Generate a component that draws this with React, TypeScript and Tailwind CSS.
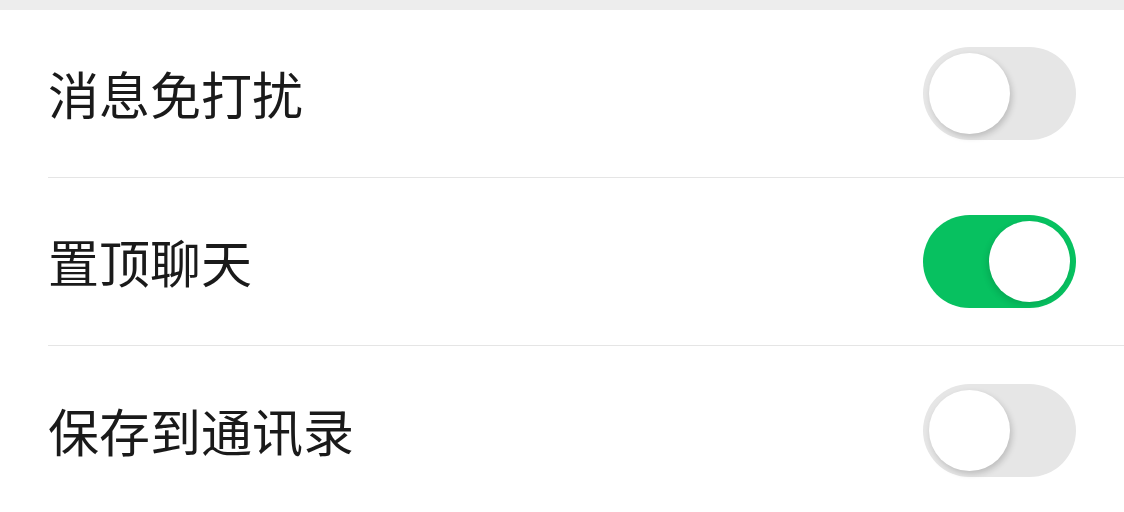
import React, { useState } from 'react';

type Setting = { label: string; on: boolean };

const initial: Setting[] = [
  { label: '消息免打扰', on: false },
  { label: '置顶聊天', on: true },
  { label: '保存到通讯录', on: false },
];

function Toggle({ on, onClick }: { on: boolean; onClick: () => void }) {
  return (
    <button
      onClick={onClick}
      className={`relative w-[153px] h-[93px] rounded-full flex-shrink-0 transition-colors ${
        on ? 'bg-[#07c160]' : 'bg-[#e6e6e6]'
      }`}
    >
      <span
        className={`absolute top-[6px] w-[81px] h-[81px] rounded-full bg-white transition-all ${
          on
            ? 'left-[66px] shadow-[-2px_3px_6px_rgba(0,0,0,0.12)]'
            : 'left-[6px] shadow-[2px_3px_6px_rgba(0,0,0,0.18)]'
        }`}
      />
    </button>
  );
}

export default function App() {
  const [settings, setSettings] = useState(initial);

  const toggle = (i: number) =>
    setSettings((s) => s.map((x, j) => (j === i ? { ...x, on: !x.on } : x)));

  return (
    <div
      className="w-[1124px] h-[512px] overflow-hidden bg-white"
      style={{ fontFamily: '"Noto Sans CJK SC", "Noto Sans", sans-serif' }}
    >
      <div className="h-[10px] bg-[#ededed]" />
      {settings.map((s, i) => (
        <div key={s.label} className="pl-[48px]">
          <div
            className={`flex items-center justify-between pr-[48px] h-[168px] ${
              i < settings.length - 1 ? 'border-b border-[#e5e5e5]' : ''
            }`}
          >
            <span className="text-[51px] leading-none text-[#1a1a1a]">{s.label}</span>
            <Toggle on={s.on} onClick={() => toggle(i)} />
          </div>
        </div>
      ))}
    </div>
  );
}
